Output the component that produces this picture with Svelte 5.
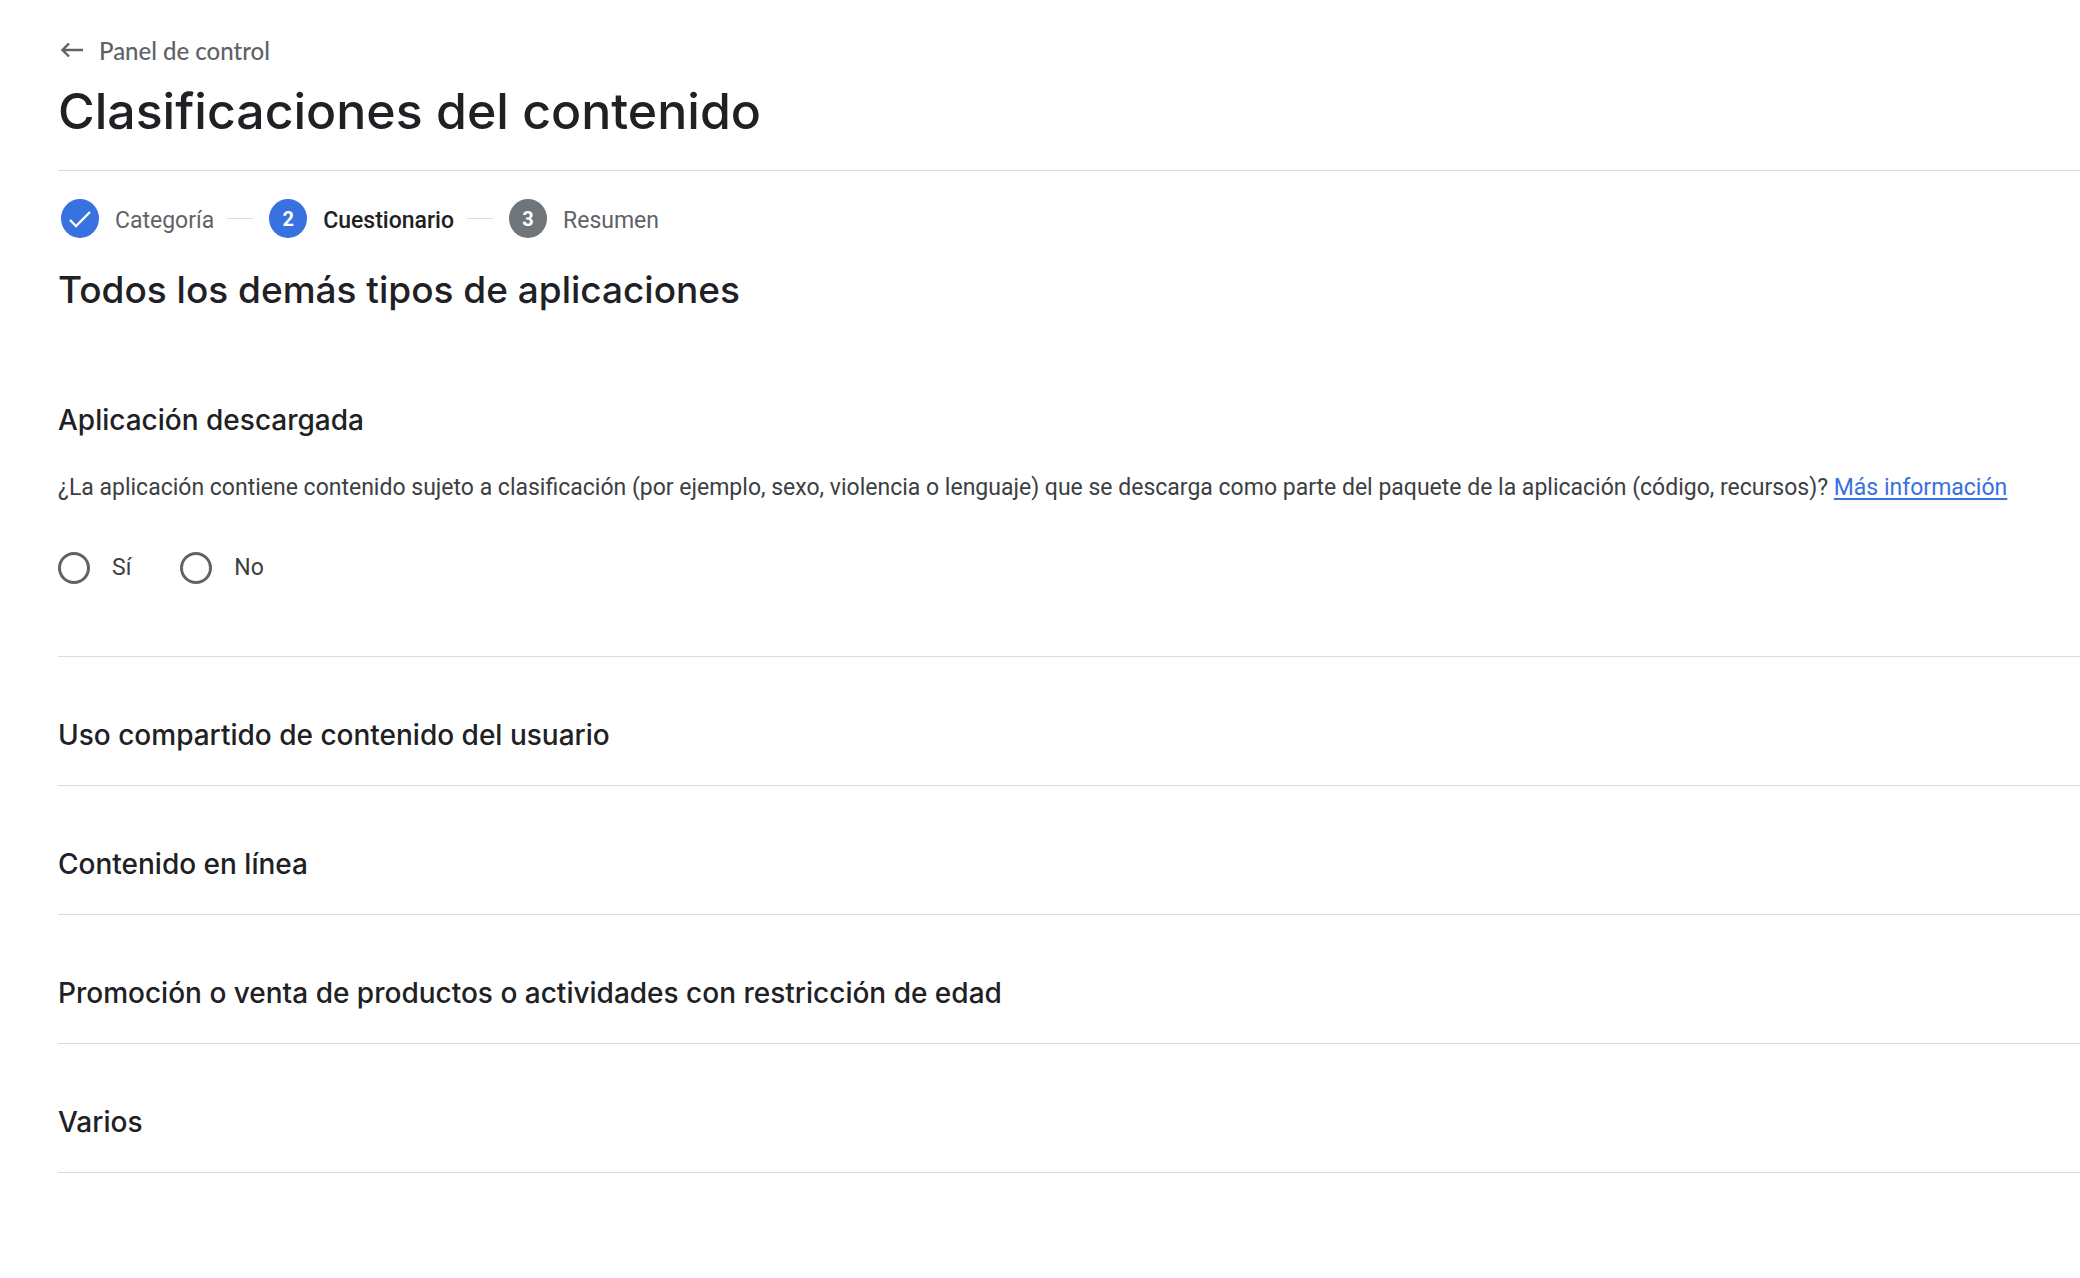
<script lang="ts">
    let downloaded = $state("");

    const steps = [
        { label: "Categoría", status: "done" },
        { label: "Cuestionario", status: "current" },
        { label: "Resumen", status: "pending" },
    ];

    const options = [
        { value: "si", label: "Sí" },
        { value: "no", label: "No" },
    ];

    const sections = [
        "Uso compartido de contenido del usuario",
        "Contenido en línea",
        "Promoción o venta de productos o actividades con restricción de edad",
        "Varios",
    ];
</script>

<svelte:head>
    <title>Clasificaciones del contenido</title>
</svelte:head>

<main>
    <header>
        <a class="back" href="#panel">
            <svg width="24" height="16" viewBox="0 0 24 16" aria-hidden="true">
                <path d="M23 7H3M9 0.5L2.5 7l6.5 6.5" fill="none" stroke="currentColor" stroke-width="2.4" />
            </svg>
            Panel de control
        </a>
        <h1>Clasificaciones del contenido</h1>
    </header>

    <ol class="steps">
        {#each steps as step, i}
            <li class={step.status}>
                <span class="badge">
                    {#if step.status === "done"}
                        <svg width="22" height="18" viewBox="0 0 22 18" aria-hidden="true">
                            <path d="M1 10l6 6L21 2" fill="none" stroke="currentColor" stroke-width="2.4" />
                        </svg>
                    {:else}
                        {i + 1}
                    {/if}
                </span>
                <span class="label">{step.label}</span>
            </li>
        {/each}
    </ol>

    <h2>Todos los demás tipos de aplicaciones</h2>

    <section class="question">
        <h3>Aplicación descargada</h3>
        <p id="question-text">
            ¿La aplicación contiene contenido sujeto a clasificación (por ejemplo, sexo, violencia o lenguaje) que se descarga como parte del paquete de la aplicación (código, recursos)?
            <a href="#info">Más información</a>
        </p>
        <div class="options" role="radiogroup" aria-labelledby="question-text">
            {#each options as option}
                <label>
                    <input type="radio" name="downloaded" value={option.value} bind:group={downloaded} />
                    {option.label}
                </label>
            {/each}
        </div>
    </section>

    {#each sections as title}
        <section class="collapsed">
            <h3>{title}</h3>
        </section>
    {/each}
</main>

<style>
    :global(body) {
        background-color: #fff;
    }

    main {
        padding: 33px 0 32px 58px;
        font-family: Roboto, sans-serif;
        font-size: 23px;
        color: #3c4043;
    }

    header {
        padding-bottom: 25px;
        border-bottom: 1px solid #dadce0;
    }

    .back {
        display: inline-flex;
        align-items: center;
        gap: 15px;
        padding-left: 2px;
        font-family: Lato, sans-serif;
        font-size: 24px;
        font-weight: 500;
        line-height: 36px;
        color: #5f6368;
        text-decoration: none;
    }

    h1, h2, h3 {
        margin: 0;
        font-family: Inter, sans-serif;
        font-weight: 500;
        color: #202124;
    }

    h1 {
        margin-top: 8px;
        font-size: 50px;
        line-height: 68px;
    }

    .steps {
        display: flex;
        margin: 0;
        padding: 28px 3px 26px;
        list-style: none;
    }

    .steps li {
        display: flex;
        align-items: center;
        color: #5f6368;
    }

    /* short rule between two steps */
    .steps li + li::before {
        content: "";
        width: 26px;
        height: 1px;
        margin: 0 16px 0 13px;
        background-color: #dadce0;
    }

    .badge {
        display: flex;
        align-items: center;
        justify-content: center;
        width: 38px;
        height: 39px;
        margin-right: 16px;
        border-radius: 50%;
        background-color: #3871e0;
        color: #fff;
        font-size: 20px;
        font-weight: 700;
    }

    .pending .badge {
        background-color: #70757a;
    }

    .label {
        padding-top: 3px;
    }

    .current .label {
        color: #202124;
        font-weight: 500;
    }

    h2 {
        font-size: 37px;
        line-height: 52px;
    }

    .question {
        padding: 84px 0 72px;
        border-bottom: 1px solid #dadce0;
    }

    h3 {
        font-size: 28px;
        line-height: 40px;
    }

    p {
        margin: 32px 0 48px;
        line-height: 32px;
    }

    p a {
        color: #3871e0;
        text-decoration-thickness: 2px;
        text-underline-offset: 3px;
    }

    .options {
        display: flex;
        gap: 49px;
    }

    label {
        display: flex;
        align-items: center;
        gap: 22px;
        line-height: 32px;
    }

    input {
        appearance: none;
        width: 32px;
        height: 32px;
        margin: 0;
        border: 3px solid #5f6368;
        border-radius: 50%;
    }

    input:checked {
        border-color: #3871e0;
        background: radial-gradient(#3871e0 50%, transparent 55%);
    }

    .collapsed {
        padding: 58px 0 30px;
        border-bottom: 1px solid #dadce0;
    }
</style>
